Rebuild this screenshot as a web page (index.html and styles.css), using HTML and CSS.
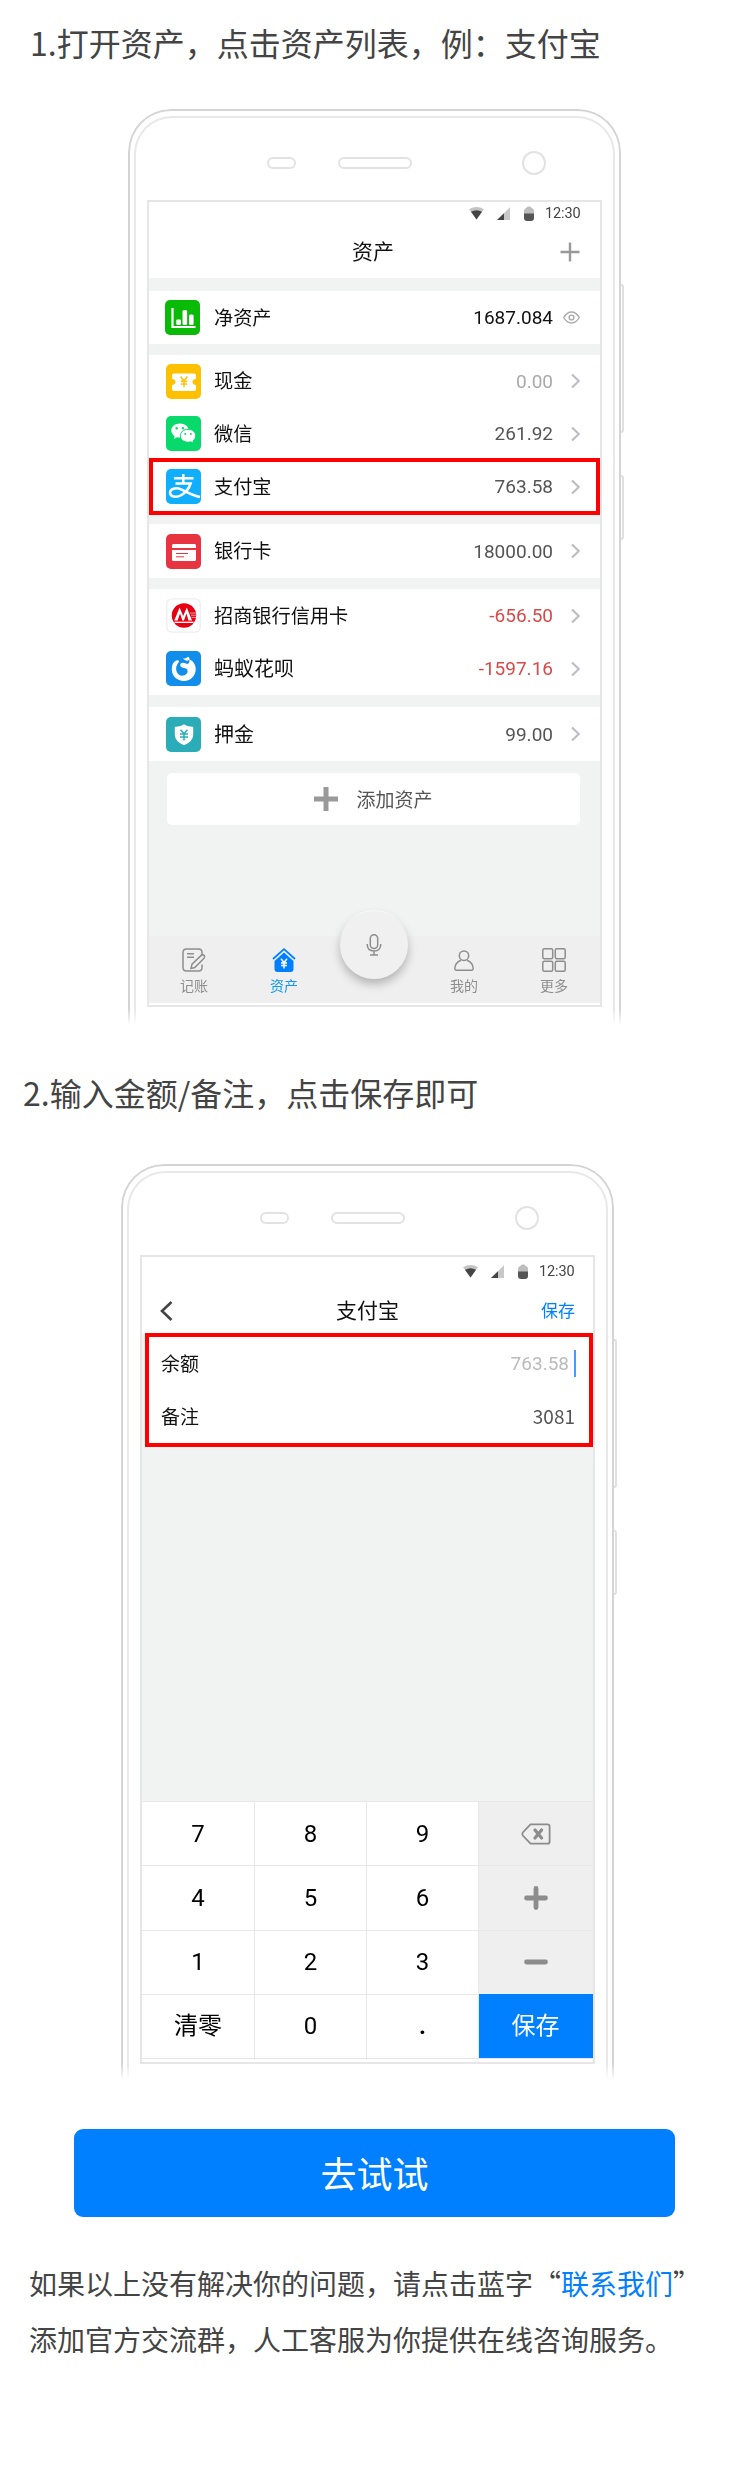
FILE: index.html
```html
<!DOCTYPE html>
<html lang="zh-CN">
<head>
<meta charset="utf-8">
<title>资产帮助</title>
<link rel="stylesheet" href="styles.css">
</head>
<body>
<svg class="defs" width="0" height="0">
  <symbol id="chev" viewBox="0 0 9 14"><path d="M1 .5 L7.800 7 L1 13.500" fill="none" stroke="#bdbdc4" stroke-width="2.200"/></symbol>
  <symbol id="status" viewBox="0 0 66 16">
    <path d="M0 3.2 Q7.5 -1 15 3.2 L7.5 13.5Z" fill="#c4c4c4"/>
    <path d="M2 5.8 Q7.5 2.6 13 5.8 L7.5 13.5Z" fill="#444"/>
    <path d="M41 1.2V14H28z" fill="#c8c8c8"/><path d="M35 7.2V14H28z" fill="#444"/>
    <path d="M55 8V4.6Q55.6 2.4 57.4 2Q57.8 .6 60 .6Q62.2 .6 62.6 2Q64.6 2.4 65 4.6V8z" fill="#bdbdbd"/>
    <path d="M55 7.5h10v4.5q0 3-3 3h-4q-3 0-3-3z" fill="#555"/>
  </symbol>
</svg>

<section class="step">
  <h2 class="title">1.打开资产，点击资产列表，例：支付宝</h2>
  <div class="phone phone-assets">
    <i class="side side-long"></i><i class="side side-short"></i>
    <div class="shell"><div class="shell-inner">
      <div class="bezel"><i class="sensor"></i><i class="speaker"></i><i class="camera"></i></div>
      <div class="screen">
        <div class="statusbar"><svg width="66" height="16"><use href="#status"/></svg><span>12:30</span></div>
        <div class="nav">
          <span></span><b class="nav-title">资产</b>
          <svg class="nav-plus" width="20" height="20" viewBox="0 0 20 20"><path d="M10 .5V19.5M.5 10H19.5" stroke="#999" stroke-width="2.4"/></svg>
        </div>

        <div class="group first">
          <div class="row net">
            <svg class="ico" viewBox="0 0 35 35"><rect width="35" height="35" rx="5" fill="#09bb07"/><path d="M7.5 8V27H30.5" fill="none" stroke="#fff" stroke-width="2.2"/><rect x="11.3" y="19.5" width="4.6" height="5.5" rx="1" fill="#fff"/><rect x="17.5" y="10" width="4.6" height="15" rx="1.5" fill="#fff"/><rect x="24" y="14.5" width="4.6" height="10.5" rx="1.5" fill="#fff"/></svg>
            <span class="name">净资产</span><span class="amt dark">1687.084</span>
            <svg class="eye" width="17" height="13" viewBox="0 0 17 13"><path d="M.7 6.5Q4 1 8.5 1T16.3 6.5Q13 12 8.5 12T.7 6.5Z" fill="none" stroke="#aaa" stroke-width="1.4"/><circle cx="8.5" cy="6.5" r="2.4" fill="none" stroke="#aaa" stroke-width="1.4"/></svg>
          </div>
        </div>

        <div class="group wallet">
          <div class="row">
            <svg class="ico" viewBox="0 0 35 35"><rect width="35" height="35" rx="5" fill="#ffc000"/><path d="M8 9.5H28Q30 9.5 30 11.5V15Q26.5 15.3 26.5 18T30 21V25Q30 27 28 27H8Q6 27 6 25V21Q9.5 20.700 9.500 18T6 15V11.500Q6 9.500 8 9.500Z" fill="#fff"/><path d="M14.600 12.500L18 17L21.400 12.500M18 17V23.300M14.800 17.200H21.200M14.800 20H21.200" fill="none" stroke="#ffc000" stroke-width="1.400"/></svg>
            <span class="name">现金</span><span class="amt mute">0.00</span><svg class="chev"><use href="#chev"/></svg>
          </div>
          <div class="row">
            <svg class="ico" viewBox="0 0 35 35"><rect width="35" height="35" rx="5" fill="#07d96b"/><path d="M14 7.500C8.800 7.500 5.300 10.700 5.300 14.500C5.300 16.900 6.600 18.900 8.600 20.200L7.900 23L11 21.200Q12.500 21.600 14.300 21.600C19.200 21.400 22.700 18.200 22.700 14.500C22.700 10.700 19 7.500 14 7.500Z" fill="#fff"/><circle cx="10.700" cy="12.300" r="1.200" fill="#07d96b"/><circle cx="17" cy="12.300" r="1.200" fill="#07d96b"/><path d="M22 13.300C17.500 13.300 14.300 16.200 14.300 19.800C14.300 23.400 17.500 26.200 22 26.200Q23.600 26.200 24.800 25.800L27.600 27.300L27 24.800C28.700 23.600 29.700 21.900 29.700 19.800C29.700 16.200 26.500 13.300 22 13.300Z" fill="#fff" stroke="#07d96b" stroke-width="1"/><circle cx="19.300" cy="18" r="1" fill="#07d96b"/><circle cx="24.800" cy="18" r="1" fill="#07d96b"/></svg>
            <span class="name">微信</span><span class="amt">261.92</span><svg class="chev"><use href="#chev"/></svg>
          </div>
          <div class="row marked">
            <svg class="ico" viewBox="0 0 35 35"><rect width="35" height="35" rx="5" fill="#10aeff"/><path d="M8 9.300H27.500M17.300 5V14.300M9.500 14.500H24.600C23 19.500 19.500 23.500 15.500 26C10.500 29 4 28 4 23.800C4 19.500 10 18.300 15 20.300C20 22.500 26 26.500 34 28" fill="none" stroke="#fff" stroke-width="2.500"/></svg>
            <span class="name">支付宝</span><span class="amt">763.58</span><svg class="chev"><use href="#chev"/></svg>
          </div>
        </div>

        <div class="group">
          <div class="row">
            <svg class="ico" viewBox="0 0 35 35"><rect width="35" height="35" rx="5" fill="#e83440"/><path d="M6 14V11.500Q6 10 7.500 10H28.500Q30 10 30 11.500V14z" fill="#fff"/><path d="M6 16H30V25.500Q30 27 28.500 27H7.500Q6 27 6 25.500z" fill="#fff"/><path d="M10 19.500H22M10 22.800H18" stroke="#e83440" stroke-width="1"/></svg>
            <span class="name">银行卡</span><span class="amt">18000.00</span><svg class="chev"><use href="#chev"/></svg>
          </div>
        </div>

        <div class="group credit">
          <div class="row">
            <svg class="ico" viewBox="0 0 35 35"><rect x=".8" y=".8" width="33.400" height="33.400" rx="5" fill="#fff" stroke="#eee" stroke-width="1.300"/><circle cx="18" cy="17.500" r="12.200" fill="#e60012"/><path d="M8.300 22.500L13.600 9.500L17.200 18L20.800 9.500L26 22.500H22.500L20.400 15.500L18 22.500H16.400L14 15.500L11.600 22.500Z" fill="#fff"/><path d="M8.500 24.300H27.500" stroke="#fff" stroke-width="1.300"/><path d="M24 15H30M25 17.200H30M25.500 19.400H30" stroke="#fff" stroke-width=".6"/></svg>
            <span class="name">招商银行信用卡</span><span class="amt minus">-656.50</span><svg class="chev"><use href="#chev"/></svg>
          </div>
          <div class="row">
            <svg class="ico" viewBox="0 0 35 35"><rect width="35" height="35" rx="5" fill="#108ee9"/><path d="M23 8.200C28 10 30 14.500 29.700 19C29.200 25.500 24 30 18 30C11 30 5.800 25 5.800 18.500C5.800 12.500 8.500 9.500 11.500 9.300C13 9.200 13.500 10.300 12.500 11.500C10.500 14 9.500 17 10.500 20.200C11.500 23.600 15 25.700 18.500 24.300C22.500 22.500 22 19 20.500 17.800C19 16.800 15 17.300 14.300 14.500C13.600 11.300 17.500 11 20 12.500C22.500 14 24.300 10.800 23 8.200Z" fill="#fff"/><path d="M16.500 7Q20 8.500 21.800 5.800Q24.500 6.500 23 9Q20 11 16.500 7Z" fill="#fff"/></svg>
            <span class="name wide">蚂蚁花呗</span><span class="amt minus">-1597.16</span><svg class="chev"><use href="#chev"/></svg>
          </div>
        </div>

        <div class="group deposit">
          <div class="row">
            <svg class="ico" viewBox="0 0 35 35"><rect width="35" height="35" rx="5" fill="#2badb9"/><path d="M18 7.200Q22 10.300 27.200 9.800V18Q27 24.500 18 28.300Q9 24.500 8.800 18V9.800Q14 10.300 18 7.200Z" fill="#fff"/><path d="M14.500 12.800L18 16.800L21.500 12.800M18 16.800V23.500M14 17H22M14 20H22" fill="none" stroke="#2badb9" stroke-width="1.500"/></svg>
            <span class="name wide">押金</span><span class="amt">99.00</span><svg class="chev"><use href="#chev"/></svg>
          </div>
        </div>

        <div class="add">
          <svg width="24" height="24" viewBox="0 0 24 24"><path d="M12 0V24M0 12H24" stroke="#999" stroke-width="5"/></svg>
          <span>添加资产</span>
        </div>

        <div class="tabs">
          <div class="tab">
            <svg width="24" height="24" viewBox="0 0 24 24" fill="none" stroke="#8e8e8e" stroke-width="1.500"><path d="M20 8V4.500Q20 1 16.500 1H4.500Q1 1 1 4.500V19.500Q1 23 4.500 23H16.500Q20 23 20 19.500V16.500M5 5.800H12M5 9.300H12"/><path d="M9 20.500L10 16.200L19.500 7.200Q21 6.200 22.200 7.500Q23.200 8.900 22 10.200L12.800 19.500Z"/></svg>
            <span>记账</span>
          </div>
          <div class="tab on">
            <svg width="24" height="24" viewBox="0 0 24 24"><path d="M1 11L12 1.200L23 11" fill="none" stroke="#0080ff" stroke-width="1.800"/><path d="M12 4.500L21.500 13V21Q21.500 24 18.500 24H5.500Q2.500 24 2.500 21V13Z" fill="#0080ff"/><path d="M9 10.800L12 14.500L15 10.800M12 14.500V20.500M9 15H15M9 17.500H15" fill="none" stroke="#fff" stroke-width="1.500"/></svg>
            <span>资产</span>
          </div>
          <div class="tab mic-slot">
            <div class="mic"><svg width="16" height="22" viewBox="0 0 16 22" fill="none" stroke="#8e8e8e" stroke-width="1.500"><rect x="4.300" y=".8" width="7.400" height="13.700" rx="3.700"/><path d="M1.200 10Q1.200 17 8 17T14.800 10M8 17V20.800M4 20.900H12"/></svg></div>
          </div>
          <div class="tab">
            <svg width="24" height="24" viewBox="0 0 24 24" fill="none" stroke="#8e8e8e" stroke-width="1.500"><circle cx="12" cy="7.700" r="4.700"/><path d="M9 12.200Q3 14.500 2.800 20.500Q2.900 22.300 4.500 22.300H19.500Q21.100 22.300 21.200 20.500Q21 14.500 15 12.200"/></svg>
            <span>我的</span>
          </div>
          <div class="tab">
            <svg width="24" height="24" viewBox="0 0 24 24" fill="none" stroke="#8e8e8e" stroke-width="1.500"><rect x=".8" y=".8" width="9.900" height="9.900" rx="1.500"/><rect x="13.300" y=".8" width="9.900" height="9.900" rx="1.500"/><rect x=".8" y="13.300" width="9.900" height="9.900" rx="1.500"/><rect x="13.300" y="13.300" width="9.900" height="9.900" rx="1.500"/></svg>
            <span>更多</span>
          </div>
        </div>
      </div>
    </div></div>
  </div>
</section>

<section class="step second">
  <h2 class="title">2.输入金额/备注，点击保存即可</h2>
  <div class="phone phone-edit">
    <i class="side side-long"></i><i class="side side-short"></i>
    <div class="shell"><div class="shell-inner">
      <div class="bezel"><i class="sensor"></i><i class="speaker"></i><i class="camera"></i></div>
      <div class="screen">
        <div class="statusbar"><svg width="66" height="16"><use href="#status"/></svg><span>12:30</span></div>
        <div class="nav">
          <svg class="back" width="13" height="20" viewBox="0 0 13 20"><path d="M11.500 1L2 10L11.500 19" fill="none" stroke="#444" stroke-width="2.600"/></svg>
          <b class="nav-title">支付宝</b><span class="save">保存</span>
        </div>
        <div class="form">
          <div class="field"><span>余额</span><span class="value hint">763.58</span><i class="caret"></i></div>
          <div class="field"><span>备注</span><span class="value note">3081</span></div>
        </div>
        <div class="keypad">
          <span class="key">7</span><span class="key">8</span><span class="key">9</span>
          <span class="key op"><svg width="30" height="22" viewBox="0 0 30 22"><path d="M9.500 1.300H26.500Q28.600 1.300 28.600 3.300V18.700Q28.600 20.700 26.500 20.700H9.500L1.800 12.500Q.7 11 1.800 9.500Z" fill="none" stroke="#8c8c8c" stroke-width="1.800"/><path d="M14 7L20.600 15M20.600 7L14 15" stroke="#8c8c8c" stroke-width="3.200" stroke-linecap="round"/></svg></span>
          <span class="key">4</span><span class="key">5</span><span class="key">6</span>
          <span class="key op"><svg width="24" height="24" viewBox="0 0 24 24"><path d="M12 2.500V21.500M2.500 12H21.500" stroke="#8c8c8c" stroke-width="4.800" stroke-linecap="round"/></svg></span>
          <span class="key">1</span><span class="key">2</span><span class="key">3</span>
          <span class="key op"><svg width="24" height="24" viewBox="0 0 24 24"><path d="M2.500 12H21.500" stroke="#8c8c8c" stroke-width="4.800" stroke-linecap="round"/></svg></span>
          <span class="key">清零</span><span class="key">0</span><span class="key dot">.</span><span class="key ok">保存</span>
        </div>
      </div>
    </div></div>
  </div>
</section>

<a class="try">去试试</a>
<p class="help">如果以上没有解决你的问题，请点击蓝字“<a class="link">联系我们</a>”<br>添加官方交流群，人工客服为你提供在线咨询服务。</p>
</body>
</html>
```

FILE: styles.css
```css
* { box-sizing: border-box; }
body {
  margin: 0;
  width: 750px;
  height: 2472px;
  background: #fff;
  color: #444;
  font-family: "Noto Sans CJK SC", sans-serif;
}
.defs { display: block; }
svg { display: block; flex: none; overflow: visible; }

.step { height: 1050px; }
.step.second { height: 1079px; }
.title {
  margin: 0;
  padding-left: 30px;
  height: 88px;
  font-size: 32px;
  font-weight: 400;
  line-height: 85px;
  white-space: nowrap;
}
.second .title { padding-left: 23px; }

.phone { position: relative; width: 493px; height: 917px; }
.phone-assets { margin: 21px 0 0 128px; }
.phone-edit { margin: 26px 0 0 121px; }
.shell, .shell-inner {
  border-style: solid;
  border-bottom: 0;
  height: 100%;
}
.shell {
  position: relative;
  border-width: 2px;
  border-color: #d4d4d4;
  border-radius: 43px 43px 0 0;
  padding: 5px 4px 0;
  background: #fff;
  -webkit-mask-image: linear-gradient(#000 900px, transparent 916px);
  mask-image: linear-gradient(#000 900px, transparent 916px);
}
.shell-inner {
  border-width: 2px;
  border-color: #e8e8e8;
  border-radius: 38px 38px 0 0;
}
.side {
  position: absolute;
  right: -3px;
  width: 5px;
  border: 2px solid #e0e0e0;
  border-radius: 0 3px 3px 0;
}
.side-long { top: 175px; height: 149px; }
.side-short { top: 366px; height: 65px; }

.bezel {
  display: flex;
  align-items: center;
  height: 82px;
  padding: 8px 0 0 131px;
}
.bezel i { border: 2px solid #e2e2e2; border-radius: 12px; }
.sensor { width: 29px; height: 12px; margin-right: 42px; }
.speaker { width: 74px; height: 12px; margin-right: 110px; }
.camera { width: 24px; height: 24px; }

.screen {
  display: flex;
  flex-direction: column;
  width: 455px;
  height: 807px;
  margin-left: 11px;
  border: 2px solid #e6e6e6;
  background: #f1f3f3;
  color: #111;
}
.phone-edit .screen { height: 809px; }
.statusbar {
  display: flex;
  align-items: center;
  justify-content: flex-end;
  gap: 10px;
  height: 23px;
  padding-right: 20px;
  background: #fff;
  color: #444;
  font: 14.5px/23px Roboto, sans-serif;
}
.statusbar span { width: 35px; letter-spacing: -.1px; }
.phone-edit .statusbar { height: 29px; padding-right: 19px; }
.nav {
  display: grid;
  grid-template-columns: 1fr auto 1fr;
  align-items: center;
  height: 53px;
  padding: 0 20px 0 17px;
  background: #fff;
}
.nav-title { padding-bottom: 3px; font-size: 21px; font-weight: 400; line-height: 30px; }
.nav-plus { justify-self: end; }
.phone-edit .nav { height: 47px; padding: 2px 18px 0; }
.save { justify-self: end; padding-bottom: 2px; color: #0080ff; font-size: 17px; }

.group { flex: none; margin-top: 12px; background: #fff; }
.group.first { margin-top: 13px; }
.group.wallet, .group.wallet + .group, .group.credit { margin-top: 11px; }
.row {
  position: relative;
  display: flex;
  align-items: center;
  height: 53px;
  padding: 0 20px 0 17px;
}
.wallet .row:first-child { height: 52px; }
.wallet + .group .row, .deposit .row { height: 54px; }
.ico { width: 35px; height: 35px; }
.net .ico { margin: 0 1px 0 -1px; }
.name { margin-left: 13px; padding-bottom: 2px; font-size: 19.2px; }
.name.wide { font-size: 20px; }
.amt {
  margin-left: auto;
  padding-top: 1px;
  color: #555;
  font: 19px/24px Roboto, sans-serif;
}
.amt.dark { color: #111; }
.amt.mute { color: #aaa; }
.amt.minus { color: #d84a4a; }
.chev { width: 9px; height: 14px; margin-left: 18px; }
.eye { margin-left: 10px; }
.marked::after {
  content: "";
  position: absolute;
  inset: -2px 0 -2px 0;
  border: 4px solid #f00;
}

.add {
  display: flex;
  flex: none;
  align-items: center;
  justify-content: center;
  gap: 18px;
  height: 52px;
  margin: 12px 20px 0 18px;
  border-radius: 5px;
  background: #fff;
  color: #555;
  font-size: 19px;
}
.add span { padding-bottom: 2px; }

.tabs {
  display: flex;
  height: 69px;
  margin-top: auto;
  padding-right: 1px;
  border-bottom: 2px solid #fff;
  background: #efefef;
}
.tab {
  display: flex;
  flex: 1;
  flex-direction: column;
  align-items: center;
  gap: 3px;
  padding-top: 12px;
  color: #8e8e8e;
  font-size: 14px;
  line-height: 20px;
}
.tab.on { color: #1296f0; }
.mic-slot { position: relative; }
.mic {
  position: absolute;
  top: -25px;
  left: 11px;
  display: flex;
  align-items: center;
  justify-content: center;
  width: 68px;
  height: 68px;
  border-radius: 50%;
  background: #f0f0f0;
  box-shadow: 0 5px 10px rgba(0, 0, 0, .25), 0 -1px 1px #fff;
}

.form {
  flex: none;
  height: 114px;
  margin-left: 3px;
  border: 4px solid #f00;
  background: #fff;
}
.field {
  display: flex;
  align-items: center;
  height: 53px;
  padding: 0 13px 3px 12px;
  font-size: 19px;
}
.value { margin-left: auto; color: #555; }
.hint { padding-top: 2px; color: #bbb; font-family: Roboto, sans-serif; }
.note { margin-right: 1px; }
.caret { width: 2px; height: 27px; margin: 2px 0 0 5px; background: #4a9bf5; }

.keypad {
  display: grid;
  grid-template-columns: 113px 112px 112px 1fr;
  grid-template-rows: repeat(4, 64.25px);
  margin-top: auto;
  margin-bottom: 3px;
  border-bottom: 1px solid #e6e6e6;
  background: #fff;
  box-shadow: 0 3px #fff;
  color: #000;
  font: 24px/1 Roboto, "Noto Sans CJK SC", sans-serif;
}
.key {
  display: flex;
  align-items: center;
  justify-content: center;
  border-top: 1px solid #e8e8e8;
  border-right: 1px solid #e8e8e8;
}
.key.op { border-right: 0; background: #efefef; }
.key.dot { font-weight: 700; }
.key.ok { border-color: #0080ff; background: #0080ff; color: #fff; }

.try {
  display: block;
  width: 601px;
  height: 88px;
  margin-left: 74px;
  border-radius: 9px;
  background: #0080ff;
  color: #fff;
  font-size: 36px;
  line-height: 86px;
  text-align: center;
}
.help {
  margin: 38px 0 0 29px;
  font-size: 28px;
  line-height: 56px;
  white-space: nowrap;
}
.link { color: #0080ff; }
```
